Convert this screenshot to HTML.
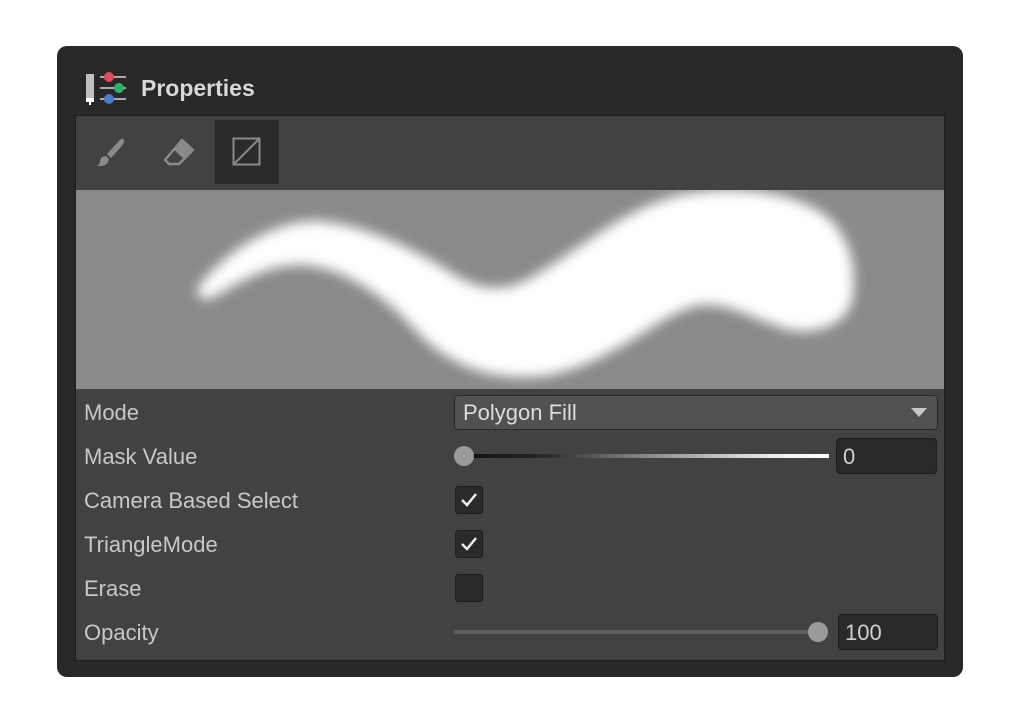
<!DOCTYPE html>
<html><head><style>
body{margin:0;width:1020px;height:727px;background:#fff;position:relative;font-family:"Liberation Sans","DejaVu Sans",sans-serif;overflow:hidden}
.abs{position:absolute}
.outer{left:57px;top:46px;width:906px;height:631px;background:#282828;border-radius:10px}
.inner{left:75px;top:115px;width:868px;height:544px;background:#424242;border:1px solid #1e1e1e;border-top:1px solid #1e1e1e}
.lbl{color:#c8c8c8;font-size:22px;left:84px}
.cb{width:26px;height:26px;background:#2a2a2a;border:1px solid #1d1d1d;border-radius:3px;left:455px}
.field{background:#2a2a2a;border:1px solid #1d1d1d;border-radius:4px;color:#d0d0d0;font-size:22px;box-sizing:border-box;padding-left:6px;line-height:36px}
</style></head><body>
<div class="abs outer"></div>
<svg class="abs" style="left:84px;top:72px" width="46" height="36" viewBox="0 0 46 36">
<rect x="2" y="2" width="8" height="24" fill="#c0c0c0"/><rect x="2" y="26" width="8" height="4" fill="#fff"/><rect x="5" y="30" width="2" height="3" fill="#fff"/>
<rect x="16" y="4" width="26" height="2" fill="#aaa"/><rect x="16" y="15" width="26" height="2" fill="#aaa"/><rect x="16" y="26" width="26" height="2" fill="#aaa"/>
<circle cx="25" cy="5" r="5" fill="#e04a59"/><circle cx="35" cy="16" r="5" fill="#2fb06a"/><circle cx="25" cy="27" r="5" fill="#4a7dc8"/>
</svg>
<div class="abs" style="left:141px;top:75px;color:#d8d8d8;font-size:23px;font-weight:bold">Properties</div>
<div class="abs inner"></div>
<div class="abs" style="left:76px;top:116px;width:868px;height:73px;background:#424242"></div>
<div class="abs" style="left:215px;top:120px;width:64px;height:64px;background:#2b2b2b"></div>
<svg class="abs" style="left:95px;top:137px" width="32" height="32" viewBox="0 0 32 32"><path d="M28 2 Q31 4 26 10 L16 21 L12 17 L23 5 Q26 1 28 2Z" fill="#8a8a8a"/><path d="M11 19 L14 22 Q13 28 7 29 L2 29 Q5 27 5 24 Q6 19 11 19Z" fill="#8a8a8a"/></svg>
<svg class="abs" style="left:162px;top:137px" width="34" height="32" viewBox="0 0 34 32"><path d="M20 3 L31 13 L17 27 L7 27 L3 23 Z" fill="none" stroke="#8a8a8a" stroke-width="2.5" stroke-linejoin="round"/><path d="M20 3 L31 13 L22 22 L11 12Z" fill="#8a8a8a"/></svg>
<svg class="abs" style="left:232px;top:137px" width="30" height="30" viewBox="0 0 30 30"><rect x="1.5" y="1.5" width="26" height="26" fill="none" stroke="#8a8a8a" stroke-width="2"/><path d="M27 2 L2 27" stroke="#8a8a8a" stroke-width="2"/></svg>
<svg class="abs" style="left:76px;top:190px" width="868" height="199" viewBox="76 190 868 199">
<defs><filter id="b" x="-20%" y="-50%" width="140%" height="200%"><feGaussianBlur stdDeviation="6"/></filter></defs>
<rect x="76" y="190" width="868" height="199" fill="#8a8a8a"/>
<path filter="url(#b)" fill="#fff" d="M200 285 C215 265 250 232 300 222 C340 216 400 240 450 272 C480 292 505 292 530 278 C580 250 620 210 680 195 C730 185 790 190 825 215 C850 235 858 270 852 300 C848 322 820 335 790 330 C760 322 730 302 700 305 C660 312 620 360 550 375 C500 382 455 370 420 335 C385 295 340 265 300 265 C265 265 240 282 212 298 C200 302 193 293 200 285Z"/>
</svg>
<div class="abs lbl" style="top:400px">Mode</div>
<div class="abs field" style="left:454px;top:395px;width:484px;height:35px;background:#515151;border-color:#2a2a2a;padding-left:8px;line-height:33px;color:#dcdcdc">Polygon Fill</div>
<div class="abs" style="left:911px;top:408px;width:0;height:0;border-left:8px solid transparent;border-right:8px solid transparent;border-top:9px solid #c8c8c8"></div>
<div class="abs lbl" style="top:444px">Mask Value</div>
<div class="abs" style="left:462px;top:454px;width:367px;height:4px;background:linear-gradient(90deg,#111 0%,#222 20%,#888 50%,#eee 85%,#fff 100%)"></div>
<div class="abs" style="left:454px;top:446px;width:20px;height:20px;border-radius:50%;background:#9a9a9a"></div>
<div class="abs field" style="left:836px;top:438px;width:101px;height:36px">0</div>
<div class="abs lbl" style="top:488px">Camera Based Select</div>
<div class="abs cb" style="top:486px"></div>
<svg class="abs" style="left:459px;top:491px" width="20" height="18"><path d="M3 9 L8 14 L17 3" stroke="#eee" stroke-width="2.5" fill="none"/></svg>
<div class="abs lbl" style="top:532px">TriangleMode</div>
<div class="abs cb" style="top:530px"></div>
<svg class="abs" style="left:459px;top:535px" width="20" height="18"><path d="M3 9 L8 14 L17 3" stroke="#eee" stroke-width="2.5" fill="none"/></svg>
<div class="abs lbl" style="top:576px">Erase</div>
<div class="abs cb" style="top:574px"></div>
<div class="abs lbl" style="top:620px">Opacity</div>
<div class="abs" style="left:454px;top:630px;width:370px;height:4px;background:#5e5e5e"></div>
<div class="abs" style="left:808px;top:622px;width:20px;height:20px;border-radius:50%;background:#9a9a9a"></div>
<div class="abs field" style="left:838px;top:614px;width:100px;height:36px">100</div>
</body></html>
